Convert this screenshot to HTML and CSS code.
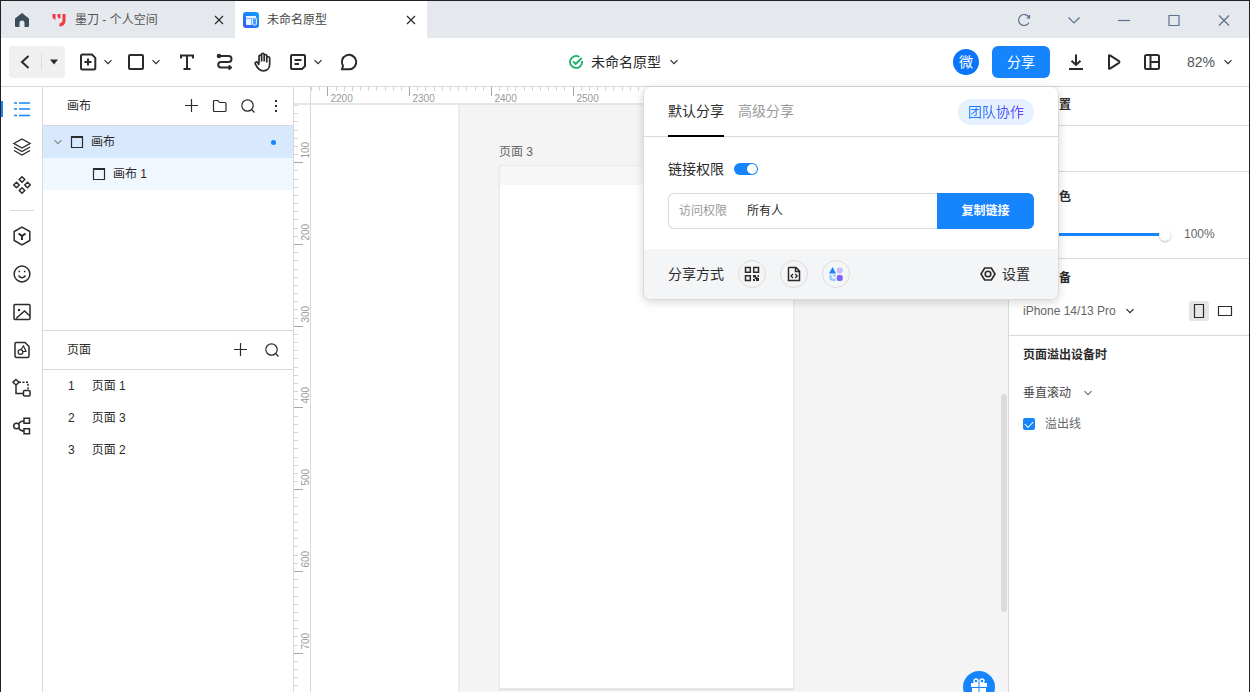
FILE: index.html
```html
<!DOCTYPE html>
<html lang="zh-CN">
<head>
<meta charset="utf-8">
<title>未命名原型</title>
<link rel="stylesheet" href="styles.css">
</head>
<body>
<svg class="sprite" aria-hidden="true">
  <symbol id="chevron" viewBox="0 0 10 10"><path d="M1.500 3.200 5 6.700l3.500-3.500"/></symbol>
  <symbol id="close" viewBox="0 0 16 16"><path d="m4 4 8 8M12 4l-8 8"/></symbol>
  <symbol id="plus" viewBox="0 0 16 16"><path d="M7.500 1v13M1 7.500h13"/></symbol>
  <symbol id="search" viewBox="0 0 16 16"><circle cx="7.500" cy="7.500" r="5.700"/><path d="m11.500 11.500 3 3"/></symbol>
  <symbol id="artboard" viewBox="0 0 14 14"><path d="M1.500 1.500h11v11h-11zM1 2.500h12"/></symbol>
</svg>

<div class="window">
  <header class="titlebar">
    <button class="home" aria-label="主页"><svg width="16" height="16" viewBox="0 0 16 16"><path fill="#3d4c59" d="M8 1 15 6.500V14q0 1-1 1h-3.500v-4a2.500 2.500 0 0 0-5 0v4H2q-1 0-1-1V6.500z"/></svg></button>
    <nav class="tabs">
      <div class="tab">
        <svg width="16" height="16" viewBox="0 0 16 16"><path fill="#f43542" d="M1.500 2h3v5.500q-3-.5-3-3zM6.500 2h3v4.500q-3 0-3-2.500zM11.500 2h3v6q0 6-6 6.500v-3q3-.5 3-3.500z"/></svg>
        <a class="tab-name" href="#space">墨刀 - 个人空间</a>
        <button class="tab-close" aria-label="关闭"><svg class="line" width="16" height="16"><use href="#close"/></svg></button>
      </div>
      <div class="tab tab-active">
        <svg width="16" height="16" viewBox="0 0 16 16"><defs><linearGradient id="app" x1="0" y1="1" x2="1" y2="0"><stop stop-color="#4b50f5"/><stop offset=".5" stop-color="#1684fc"/><stop offset="1" stop-color="#18a0fb"/></linearGradient></defs><rect width="16" height="16" rx="3" fill="url(#app)"/><path fill="#e8f2ff" d="M3 4h10v2H3zM3 6.500h5.500V13H4q-1 0-1-1z"/><rect x="9.500" y="6" width="4" height="7" rx="1" fill="#4d9dff" stroke="#d7eaff"/></svg>
        <a class="tab-name" href="#proto">未命名原型</a>
        <button class="tab-close" aria-label="关闭"><svg class="line" width="16" height="16"><use href="#close"/></svg></button>
      </div>
    </nav>
    <div class="win-controls">
      <button aria-label="刷新"><svg class="line" width="14" height="14" viewBox="0 0 14 14"><path d="M12 9.500A5.500 5.500 0 1 1 12 4.500M12.500 2v3H9.500"/></svg></button>
      <button aria-label="更多"><svg class="line" width="14" height="14" viewBox="0 0 14 14"><path d="m1.500 4.500 5.500 5.500 5.500-5.500"/></svg></button>
      <button aria-label="最小化"><svg class="line" width="14" height="14" viewBox="0 0 14 14"><path d="M1 7.500h12"/></svg></button>
      <button aria-label="最大化"><svg class="line" width="14" height="14" viewBox="0 0 14 14"><path d="M2 2.500h10v10H2z"/></svg></button>
      <button aria-label="关闭窗口"><svg class="line" width="14" height="14" viewBox="0 0 14 14"><path d="m2 2.500 10 10m0-10-10 10"/></svg></button>
    </div>
  </header>

  <div class="toolbar">
    <div class="tools">
      <div class="back-group">
        <button class="back" aria-label="返回"><svg class="line bold" width="16" height="16" viewBox="0 0 16 16"><path d="M11.500 2 5 8l6.500 6"/></svg></button>
        <button class="back-menu" aria-label="返回菜单"><svg width="8" height="6" viewBox="0 0 8 6"><path fill="#2b2b2b" d="M0 .5h8L4 5.500z"/></svg></button>
      </div>
      <div class="tool-pair">
        <button class="tool-icon" aria-label="新建"><svg class="line bold" width="20" height="20" viewBox="0 0 20 20"><path d="M4.500 2.500H14l3.300 3.300v10.200q0 1.500-1.500 1.500H4.500Q3 17.500 3 16V4q0-1.500 1.500-1.500zM10 6.500v7M6.500 10h7"/></svg></button>
        <button aria-label="新建菜单"><svg class="line" width="10" height="10"><use href="#chevron"/></svg></button>
      </div>
      <div class="tool-pair">
        <button class="tool-icon" aria-label="形状"><svg class="line bold" width="20" height="20" viewBox="0 0 20 20"><rect x="3" y="3" width="14" height="14" rx="1"/></svg></button>
        <button aria-label="形状菜单"><svg class="line" width="10" height="10"><use href="#chevron"/></svg></button>
      </div>
      <button class="tool" aria-label="文字"><svg class="line bold" width="20" height="20" viewBox="0 0 20 20"><path d="M4 6.500V3.500h12v3M10 3.500v13.500M6.500 17h7"/></svg></button>
      <button class="tool" aria-label="连线"><svg class="line bold" width="20" height="20" viewBox="0 0 20 20"><circle cx="4" cy="4" r="1.300" fill="#2b2b2b"/><path d="M4 4h9.500a3 3 0 0 1 0 6H6a2.800 2.800 0 0 0 0 5.600h10"/><path d="m14 13.200 3 2.400-3 2.400z" fill="#2b2b2b" stroke-width="1"/></svg></button>
      <button class="tool" aria-label="抓手"><svg class="line" width="20" height="20" viewBox="0 0 20 20"><path stroke-width="1.700" d="M6 11.500V4.500a1.300 1.300 0 0 1 2.600 0V9.500V2.600a1.300 1.300 0 0 1 2.600 0V9.500V3.800a1.300 1.300 0 0 1 2.600 0V10.500V6.200a1.300 1.300 0 0 1 2.900 0V12c0 4-2.500 6.800-6.400 6.800-3.800 0-5.900-2.200-7.900-6.600-.8-1.900 1.200-3 2.300-1.400L6 13"/></svg></button>
      <div class="tool-pair">
        <button class="tool-icon" aria-label="便签"><svg class="line bold" width="20" height="20" viewBox="0 0 20 20"><path d="M4 3h12q1 0 1 1v10l-3 3H4q-1 0-1-1V4q0-1 1-1zM6.500 8h7M6.500 12h4.500"/></svg></button>
        <button aria-label="便签菜单"><svg class="line" width="10" height="10"><use href="#chevron"/></svg></button>
      </div>
      <button class="tool" aria-label="评论"><svg class="line bold" width="20" height="20" viewBox="0 0 20 20"><path d="M3 17.300 4 14A7.200 7.200 0 1 1 10.200 17.300z"/></svg></button>
    </div>

    <button class="doc-title">
      <svg width="14" height="14" viewBox="0 0 14 14"><path fill="none" stroke="#17b26a" stroke-width="1.800" d="M10.300 1.900A6 6 0 1 0 13 6M4 6.300 6.700 9l6-6"/></svg>
      <span>未命名原型</span>
      <svg class="line" width="10" height="10"><use href="#chevron"/></svg>
    </button>

    <div class="actions">
      <div class="share-group">
        <span class="avatar">微</span>
        <button class="share">分享</button>
      </div>
      <button class="action" aria-label="下载"><svg class="line bold" width="20" height="20" viewBox="0 0 20 20"><path d="M10 2.500v10.500M5.500 8.800 10 13l4.500-4.200M3 17h14"/></svg></button>
      <button class="action" aria-label="预览"><svg class="line bold" width="20" height="20" viewBox="0 0 20 20"><path stroke-linejoin="round" d="M5 3.800q0-1 1-.5l9 5.900q.9.800 0 1.600l-9 5.900q-1 .5-1-.5z"/></svg></button>
      <button class="action" aria-label="布局"><svg class="line bold" width="20" height="20" viewBox="0 0 20 20"><rect x="3" y="3" width="14" height="14" rx="1.500"/><path d="M8.500 3v14M8.500 10H17"/></svg></button>
      <button class="zoom">82%<svg class="line" width="10" height="10"><use href="#chevron"/></svg></button>
    </div>
  </div>

  <main class="workspace">
    <nav class="rail">
      <button class="rail-active" aria-label="页面"><svg class="line" width="20" height="20" viewBox="0 0 20 20"><path stroke-width="1.500" d="M2 4h3M7 4h11M2 10h3M7 10h11M2 16.500h3M7 16.500h11"/></svg></button>
      <button aria-label="图层"><svg class="line" width="20" height="20" viewBox="0 0 20 20"><path stroke-width="1.400" d="M10 2 18 6.500 10 11 2 6.500zM2 10l8 4.500 8-4.500M2 13.500 10 18l8-4.500"/></svg></button>
      <button aria-label="组件"><svg class="line" width="20" height="20" viewBox="0 0 20 20"><path stroke-width="1.500" d="M10 1.700 12.800 4.500 10 7.300 7.200 4.500zM10 12.700l2.800 2.800-2.800 2.800-2.800-2.800zM4.500 7.200 7.300 10l-2.800 2.800L1.700 10zM15.500 7.200l2.800 2.800-2.800 2.800-2.800-2.800z" stroke-linejoin="round"/></svg></button>
      <hr>
      <button aria-label="素材"><svg class="line" width="20" height="20" viewBox="0 0 20 20"><path stroke-width="1.500" d="M10 1.200 17.800 5.500v9L10 18.800 2.200 14.500v-9z"/><path stroke-width="2" d="M6.500 7.500 10 10l3.500-2.500M10 10v4"/></svg></button>
      <button aria-label="图标"><svg class="line" width="20" height="20" viewBox="0 0 20 20"><circle cx="10" cy="10" r="7.900" stroke-width="1.500"/><path stroke-width="1.500" d="M6.500 7.500h1.500M12 7.500h1.500M6.500 11.500q3.500 4.500 7 0"/></svg></button>
      <button aria-label="图片"><svg class="line" width="20" height="20" viewBox="0 0 20 20"><rect x="2" y="2.500" width="16" height="15" rx="1" stroke-width="1.500"/><path stroke-width="1.500" d="m4 16.500 8.500-7.500 5.500 5"/><circle cx="7" cy="8" r="1.200" fill="#2b2b2b" stroke="none"/></svg></button>
      <button aria-label="母版"><svg class="line" width="20" height="20" viewBox="0 0 20 20"><path stroke-width="1.500" d="M4 2.500h9l4 4V16q0 1.500-1.500 1.500h-11Q3 17.500 3 16V3.500q0-1 1-1z"/><circle cx="8.500" cy="12" r="2.400"/><path d="M9 9.500 11.500 6l2.500 5.500h-3"/></svg></button>
      <button aria-label="流程"><svg class="line" width="20" height="20" viewBox="0 0 20 20"><path stroke-width="1.500" d="M4 1.500 7 4.200 4 7 1 4.200zM4 7v8.500h7.500"/><path stroke-width="1.500" stroke-dasharray="2 1.500" d="M7 4.200h9v7"/><rect x="11.500" y="12.500" width="6.500" height="5.500" rx="1" stroke-width="1.500"/></svg></button>
      <button aria-label="分支"><svg class="line" width="20" height="20" viewBox="0 0 20 20"><circle cx="4.500" cy="10" r="2.800" stroke-width="1.500"/><path stroke-width="1.500" d="M6.500 7.800Q8.500 5 12 5M6.500 12.200Q8.500 15 12 15M12 2.300h5.500v5H12zM12 12.700h5.500v5H12z"/></svg></button>
    </nav>

    <aside class="panel">
      <section class="canvases">
        <div class="panel-head">
          <h2>画布</h2>
          <button aria-label="新建画布"><svg class="line" width="16" height="16"><use href="#plus"/></svg></button>
          <button aria-label="新建文件夹"><svg class="line" width="16" height="16" viewBox="0 0 16 16"><path d="M2.500 2.500H6l1.500 2H13q1 0 1 1v7q0 1-1 1H2.500q-1 0-1-1v-9q0-1 1-1z"/></svg></button>
          <button aria-label="搜索画布"><svg class="line" width="16" height="16"><use href="#search"/></svg></button>
          <button aria-label="更多操作"><svg width="16" height="16" viewBox="0 0 16 16"><path fill="#2b2b2b" d="M7 2h2v2H7zM7 7h2v2H7zM7 12h2v2H7z"/></svg></button>
        </div>
        <ul class="tree">
          <li class="tree-root">
            <svg class="line twisty" width="10" height="10"><use href="#chevron"/></svg>
            <svg class="line" width="14" height="14"><use href="#artboard"/></svg>
            <span>画布</span><i class="dot"></i>
          </li>
          <li class="tree-child">
            <svg class="line" width="14" height="14"><use href="#artboard"/></svg>
            <span>画布 1</span>
          </li>
        </ul>
      </section>
      <section class="pages">
        <div class="panel-head pages-head">
          <h2>页面</h2>
          <button aria-label="新建页面"><svg class="line" width="16" height="16"><use href="#plus"/></svg></button>
          <button aria-label="搜索页面"><svg class="line" width="16" height="16"><use href="#search"/></svg></button>
        </div>
        <ul class="page-list">
          <li><b>1</b>页面 1</li>
          <li><b>2</b>页面 3</li>
          <li><b>3</b>页面 2</li>
        </ul>
      </section>
    </aside>

    <section class="stage">
      <div class="ruler-corner"></div>
      <svg class="ruler ruler-x"></svg>
      <svg class="ruler ruler-y"></svg>
      <div class="canvas">
        <div class="canvas-area"></div>
        <div class="frame-label">页面 3</div>
        <div class="frame"><div class="frame-status"></div></div>
        <div class="scroll-thumb"></div>
        <button class="gift" aria-label="福利"><svg width="18" height="18" viewBox="0 0 18 18"><path fill="#fff" d="M1 5h7.500v4H1zM9.500 5H17v4H9.500zM2 10h6.500v7H2zM9.500 10H16v7H9.500z"/><circle cx="6" cy="3" r="2" fill="none" stroke="#fff" stroke-width="1.400"/><circle cx="12" cy="3" r="2" fill="none" stroke="#fff" stroke-width="1.400"/></svg></button>
      </div>
    </section>

    <aside class="inspector">
      <h2 class="insp-title">页面设置</h2>
      <div class="insp-blank"></div>
      <section class="insp-color">
        <h3>背景颜色</h3>
        <div class="opacity">
          <input type="range" min="0" max="100" value="100" aria-label="不透明度">
          <span>100%</span>
        </div>
      </section>
      <section class="insp-device">
        <h3>预览设备</h3>
        <div class="device-row">
          <select aria-label="设备"><option>iPhone 14/13 Pro</option></select>
          <svg class="line" width="10" height="10"><use href="#chevron"/></svg>
          <div class="orient">
            <button class="orient-on" aria-label="竖屏"><svg class="line" width="16" height="16" viewBox="0 0 16 16"><path d="M3.500 1.500h9v13h-9z"/></svg></button>
            <button aria-label="横屏"><svg class="line" width="16" height="16" viewBox="0 0 16 16"><path d="M1.500 3.500h13v9h-13z"/></svg></button>
          </div>
        </div>
      </section>
      <section class="insp-overflow">
        <h3>页面溢出设备时</h3>
        <div class="scroll-row">
          <select aria-label="滚动方式"><option>垂直滚动</option></select>
          <svg class="line" width="10" height="10"><use href="#chevron"/></svg>
        </div>
        <label class="check"><input type="checkbox" checked>溢出线</label>
      </section>
    </aside>

    <div class="popover" role="dialog" aria-label="分享">
      <div class="pop-head">
        <button class="pop-tab pop-tab-on">默认分享</button>
        <button class="pop-tab">高级分享</button>
        <button class="team"><span>团队协作</span></button>
      </div>
      <div class="pop-body">
        <label class="switch-row">链接权限<input class="switch" type="checkbox" checked></label>
        <div class="link-row">
          <label for="access">访问权限</label>
          <select id="access"><option>所有人</option></select>
          <button>复制链接</button>
        </div>
      </div>
      <div class="pop-foot">
        <span>分享方式</span>
        <button class="way" aria-label="二维码"><svg class="line" width="16" height="16" viewBox="0 0 16 16"><path stroke-width="1.500" d="M1.500 1.500h4.800v4.800H1.500zM9.700 1.500h4.800v4.800H9.700zM1.500 9.700h4.800v4.800H1.500z"/><path fill="#2b2b2b" stroke="none" d="M9 9h3v2h3V9h-1.500v3h1.500v3h-3v-2h-1v2H9v-2h2v-1.500H9z"/></svg></button>
        <button class="way" aria-label="嵌入代码"><svg class="line" width="16" height="16" viewBox="0 0 16 16"><path stroke-width="1.500" d="M3 1.500h7l3.500 3.500v9.500H2.500V2zM9.500 1.500V5.500h4"/><path stroke-width="1.300" d="m7 8-2 2 2 2M9.200 8l2 2-2 2"/></svg></button>
        <button class="way" aria-label="应用"><svg width="16" height="16" viewBox="0 0 16 16"><path fill="#1684fc" d="M4.500 1 8 7.500H1z"/><circle cx="11.700" cy="4.500" r="3.100" fill="#c9bdfb"/><rect x="8.700" y="9" width="6" height="6" rx="2" fill="#7b61ff"/><path fill="none" stroke="#8fc6ff" stroke-width="2.200" d="M7.500 13.800H4.800a2.200 2.200 0 0 1-2.200-2.200V9M5 9.500h2.500"/></svg></button>
        <button class="settings"><svg class="line" width="16" height="16" viewBox="0 0 16 16"><path stroke-width="1.600" stroke-linejoin="round" d="M4.700 2h6.600L15 8l-3.700 6H4.700L1 8z"/><circle cx="8" cy="8" r="2.800" stroke-width="1.600"/></svg>设置</button>
      </div>
    </div>
  </main>
</div>
<script src="rulers.js"></script>
</body>
</html>
```
FILE: styles.css
```css
* { box-sizing: border-box; }
body {
  margin: 0;
  font: 12px/20px "Liberation Sans", "Noto Sans CJK SC", sans-serif;
  color: #2b2b2b;
}
button, select, input { margin: 0; padding: 0; border: 0; background: none; font: inherit; color: inherit; }
button { display: flex; align-items: center; justify-content: center; }
select { appearance: none; }
h2, h3, ul { margin: 0; padding: 0; list-style: none; font-size: 12px; }
svg { display: block; flex: none; }
.sprite { position: absolute; width: 0; height: 0; }
.line { fill: none; stroke: #2b2b2b; stroke-width: 1.2; }
.bold { stroke-width: 2; }

.window {
  display: flex; flex-direction: column;
  height: 100vh; overflow: hidden; background: #fff;
  border: 1px solid #231f24; border-bottom: 0;
}

/* title bar */
.titlebar { display: flex; flex: none; height: 37px; background: #e5e8ec; }
.home { width: 42px; }
.tabs { display: flex; flex: 1; }
.tab { display: flex; align-items: center; gap: 8px; width: 192px; padding: 0 8px; }
.tab-active { background: #fff; }
.tab-name { flex: 1; color: #555; text-decoration: none; }
.tab-active .tab-name { color: #444; }
.win-controls { display: flex; }
.win-controls button { width: 50px; }
.win-controls .line { stroke: #5b7091; }

/* toolbar */
.toolbar {
  display: grid; grid-template-columns: 1fr auto 1fr; align-items: center;
  flex: none; height: 49px; border-bottom: 1px solid #d9d9d9;
}
.tools { display: flex; align-items: center; gap: 13px; padding-left: 8px; }
.back-group { display: flex; width: 56px; height: 32px; border-radius: 4px; background: #f0f0f0; align-items: center; }
.back { width: 32px; }
.back-menu { flex: 1; height: 16px; border-left: 1px solid #dcdcdc; }
.tool-pair { display: flex; align-items: center; gap: 5px; }
.tool { width: 25px; }
.doc-title { gap: 8px; padding-right: 2px; font-size: 14px; }
.actions { display: flex; align-items: center; justify-content: flex-end; gap: 14px; padding-right: 16px; }
.share-group { display: flex; align-items: center; gap: 13px; }
.avatar { width: 26px; height: 26px; border-radius: 50%; background: #0a75fa; color: #fff; font-size: 14px; line-height: 26px; text-align: center; }
.share { width: 58px; height: 32px; border-radius: 6px; background: #1684fc; color: #fff; font-size: 14px; }
.action { width: 24px; }
.zoom { gap: 8px; padding-left: 9px; font-size: 14px; color: #555; }

.workspace { position: relative; display: flex; flex: 1; min-height: 0; }

/* icon rail */
.rail { flex: none; width: 42px; padding-top: 3px; border-right: 1px solid #d9d9d9; }
.rail button { position: relative; width: 42px; height: 38px; }
.rail hr { width: 24px; height: 1px; margin: 6px 9px; border: 0; background: #d9d9d9; }
.rail-active::before { content: ""; position: absolute; left: 0; width: 2px; height: 16px; background: #1684fc; }
.rail-active .line { stroke: #1684fc; }

/* canvas and page lists */
.panel { flex: none; width: 251px; border-right: 1px solid #d9d9d9; }
.canvases { height: 243px; }
.panel-head { display: flex; align-items: center; gap: 12px; height: 39px; padding: 0 9px 0 24px; border-bottom: 1px solid #d9d9d9; }
.panel-head h2 { flex: 1; font-weight: 400; }
.pages { border-top: 1px solid #d9d9d9; }
.pages-head { gap: 15px; padding-right: 13px; }
.tree li { display: flex; align-items: center; gap: 7px; height: 32px; }
.tree .tree-root { padding: 0 17px 0 10px; background: #d9e9fd; }
.tree-root .twisty { stroke: #888; }
.tree-root span { flex: 1; }
.tree .tree-child { padding-left: 49px; background: #f0f7ff; }
.dot { width: 5px; height: 5px; border-radius: 50%; background: #1684fc; }
.page-list li { display: flex; align-items: center; gap: 17px; height: 32px; padding-left: 25px; }
.page-list b { font-weight: 400; }

/* stage with rulers */
.stage {
  display: grid; flex: 1; min-width: 0;
  grid-template: 18px minmax(0, 1fr) / 17px minmax(0, 1fr);
}
.ruler-corner { border-right: 1px solid #d9d9d9; border-bottom: 2px solid #e6e6e6; }
.ruler { width: 100%; height: 100%; overflow: hidden; }
.ruler-x { border-bottom: 2px solid #e6e6e6; }
.ruler-y { border-right: 1px solid #d9d9d9; }
.ruler text { font-size: 10px; fill: #999; }
.ruler .major { stroke: #a6a6a6; }
.ruler .minor { stroke: #d4d4d4; }
.canvas { position: relative; overflow: hidden; }
.canvas-area { position: absolute; inset: 0 0 0 147px; border-left: 2px solid #ebebeb; background: #f4f4f4; }
.frame-label { position: absolute; left: 188px; top: 37px; color: #666; }
.frame { position: absolute; left: 188px; top: 60px; width: 295px; height: 524px; border: 1px solid #eaeaea; background: #fff; box-shadow: 0 1px 1px #ddd; }
.frame-status { height: 19px; background: #f7f7f7; }
.scroll-thumb { position: absolute; right: 1px; top: 289px; width: 6px; height: 218px; border-radius: 3px; background: #dbdbdb; }
.gift { position: absolute; right: 13px; bottom: -11px; width: 32px; height: 32px; border-radius: 50%; background: #1684fc; }

/* inspector */
.inspector { flex: none; width: 241px; border-left: 1px solid #d9d9d9; color: #666; }
.inspector h2, .inspector h3 { color: #2b2b2b; }
.insp-title { height: 39px; padding: 8px 14px; border-bottom: 1px solid #d9d9d9; }
.insp-blank { height: 46px; border-bottom: 1px solid #d9d9d9; }
.insp-color { height: 87px; padding: 15px 14px 0; border-bottom: 1px solid #d9d9d9; }
.opacity { display: flex; align-items: center; gap: 13px; margin-top: 17px; }
.opacity input { appearance: none; width: 148px; height: 12px; }
.opacity input::-webkit-slider-runnable-track { height: 3px; background: #1684fc; border-radius: 2px; }
.opacity input::-webkit-slider-thumb { appearance: none; width: 12px; height: 12px; margin-top: -4px; border-radius: 50%; background: #fff; box-shadow: 0 1px 2px rgba(0, 0, 0, .25); }
.insp-device { height: 77px; padding: 9px 14px 0; border-bottom: 1px solid #d9d9d9; }
.device-row, .scroll-row { display: flex; align-items: center; gap: 9px; }
.device-row { margin-top: 13px; }
.orient { display: flex; gap: 6px; margin-left: auto; }
.orient button { width: 20px; height: 20px; border-radius: 3px; }
.orient .orient-on { background: #e5e5e5; }
.insp-overflow { padding: 9px 14px; }
.scroll-row { margin-top: 18px; gap: 11px; color: #444; }
.scroll-row .line { stroke: #6b7280; }
.check { display: flex; align-items: center; gap: 10px; margin-top: 11px; }
.check input { appearance: none; width: 12px; height: 12px; border-radius: 2px; background: #1684fc; display: grid; place-items: center; }
.check input::before { content: ""; width: 7px; height: 4px; border: solid #fff; border-width: 0 0 1px 1px; rotate: -45deg; translate: 0 -1px; }

/* share popover */
.popover {
  position: absolute; top: 0; right: 190px; width: 416px; overflow: hidden;
  border: 1px solid #dcdcdc; border-top: 0; border-radius: 8px; background: #fff; font-size: 14px;
  box-shadow: 0 2px 10px rgba(0, 0, 0, .16);
}
.pop-head { display: flex; align-items: center; gap: 14px; height: 50px; padding: 0 24px; border-bottom: 1px solid #d9d9d9; }
.pop-tab { height: 50px; color: #999; border-bottom: 2px solid transparent; }
.pop-tab-on { color: #2b2b2b; border-color: #000; }
.team { height: 26px; padding: 0 10px; margin-left: auto; border-radius: 13px; background: #e5f1ff; }
.team span { color: transparent; background: linear-gradient(90deg, #1684fc, #6a3dfa); background-clip: text; }
.pop-body { padding: 22px 24px 20px; }
.switch-row { display: flex; align-items: center; gap: 10px; }
.switch { appearance: none; width: 24px; height: 12px; padding: 1px; border-radius: 6px; background: #1684fc; }
.switch::before { content: ""; display: block; width: 10px; height: 10px; margin-left: auto; border-radius: 50%; background: #fff; }
.link-row { display: flex; align-items: stretch; height: 36px; margin-top: 14px; font-size: 12px; line-height: 34px; }
.link-row label { padding: 0 20px 0 10px; color: #999; border: 1px solid #d9d9d9; border-right: 0; border-radius: 6px 0 0 6px; }
.link-row select { flex: 1; border: solid #d9d9d9; border-width: 1px 0; border-radius: 0; }
.link-row button { width: 97px; border-radius: 0 6px 6px 0; background: #1684fc; color: #fff; font-weight: 700; }
.pop-foot { display: flex; align-items: center; gap: 14px; height: 50px; padding: 0 28px 0 24px; background: #f4f5f7; }
.way { width: 28px; height: 28px; border: 1px solid #dcdcdc; border-radius: 50%; }
.settings { gap: 6px; margin-left: auto; }
```
FILE: rulers.js
```js
// Draws ruler ticks: one tick per 10 units, a labelled one per 100.
const SCALE = 0.8175;
const LABEL_ROOM = 28;

function drawRuler(svg, first, limit, vertical) {
  let out = '';
  for (let v = first; (v - first) * SCALE < limit; v += 10) {
    const p = Math.round((v - first) * SCALE) + 0.5;
    const major = v % 100 === 0;
    const len = major ? 9 : 4;
    const cls = major ? 'major' : 'minor';
    out += vertical
      ? `<line class="${cls}" x1="0" x2="${len}" y1="${p}" y2="${p}"/>`
      : `<line class="${cls}" y1="0" y2="${len}" x1="${p}" x2="${p}"/>`;
    if (major && (vertical || p + LABEL_ROOM < limit)) {
      out += vertical
        ? `<text transform="translate(15 ${p - 4}) rotate(-90)">${v}</text>`
        : `<text x="${p + 3}" y="15">${v}</text>`;
    }
  }
  svg.innerHTML = out;
}

const rulerX = document.querySelector('.ruler-x');
const rulerY = document.querySelector('.ruler-y');
const popover = document.querySelector('.popover');

function drawRulers() {
  // The horizontal ruler stops where the open popover begins.
  const room = popover.getBoundingClientRect().left - rulerX.getBoundingClientRect().left;
  drawRuler(rulerX, 2180, room, false);
  drawRuler(rulerY, 30, rulerY.getBoundingClientRect().height, true);
}

drawRulers();
window.addEventListener('resize', drawRulers);
```
